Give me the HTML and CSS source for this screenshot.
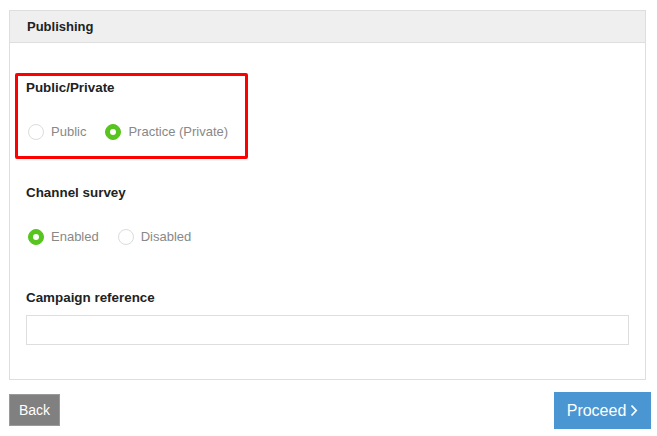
FILE: index.html
```html
<!DOCTYPE html>
<html>
<head>
<meta charset="utf-8">
<link rel="stylesheet" href="styles.css">
</head>
<body>
<div class="page">
  <div class="panel">
    <div class="panel-head">Publishing</div>
    <div class="panel-body">
      <div class="group highlight">
        <div class="label">Public/Private</div>
        <div class="radios">
          <span class="radio"><span class="dot"></span><span class="rtext">Public</span></span>
          <span class="radio on"><span class="dot"></span><span class="rtext">Practice (Private)</span></span>
        </div>
      </div>
      <div class="group second">
        <div class="label">Channel survey</div>
        <div class="radios">
          <span class="radio on"><span class="dot"></span><span class="rtext">Enabled</span></span>
          <span class="radio"><span class="dot"></span><span class="rtext">Disabled</span></span>
        </div>
      </div>
      <div class="group third">
        <div class="label">Campaign reference</div>
        <input class="field" type="text">
      </div>
    </div>
  </div>
  <div class="footer">
    <button class="btn back">Back</button>
    <button class="btn proceed">Proceed <svg class="chev" width="8" height="13" viewBox="0 0 8 13"><path d="M1.5 1.5 L6.2 6.5 L1.5 11.5" fill="none" stroke="#fff" stroke-width="1.8"/></svg></button>
  </div>
</div>
</body>
</html>
```

FILE: styles.css
```css
html, body { margin: 0; padding: 0; background: #fff; }
body { font-family: "Liberation Sans", Arial, Helvetica, sans-serif; color: #222; }
.page { padding: 10px 6px 0 9px; width: 642px; }
.panel { width: 635px; border: 1px solid #dedede; }
.panel-head { height: 31px; line-height: 31px; background: #efefef; border-bottom: 1px solid #dedede; padding-left: 17px; font-size: 13px; font-weight: bold; color: #222; }
.panel-body { padding: 30px 16px 34px 16px; }
.label { font-size: 13.4px; font-weight: bold; line-height: 16px; color: #222; white-space: nowrap; }
.highlight { width: 219px; margin-left: -11px; border: 3px solid #ff0000; border-radius: 2px; padding: 4px 0 16px 8px; }
.radios { display: flex; align-items: center; margin-top: 28px; height: 16px; white-space: nowrap; }
.radio { display: flex; align-items: center; margin-right: 17px; margin-left: 2px; flex: none; }
.dot { width: 14px; height: 14px; border-radius: 50%; border: 1px solid #dcdcdc; background: #fff; box-sizing: content-box; flex: none; }
.radio.on .dot { background: #57c41f; border-color: #57c41f; position: relative; }
.radio.on .dot::after { content: ""; position: absolute; left: 4px; top: 4px; width: 6px; height: 6px; border-radius: 50%; background: #fff; }
.rtext { margin-left: 7px; font-size: 13px; color: #888; line-height: 16px; }
.second { margin-top: 26px; }
.third { margin-top: 45px; }
.field { display: block; margin-top: 9px; width: 603px; height: 30px; box-sizing: border-box; border: 1px solid #dedede; background: #fff; outline: none; padding: 0 8px; }
.footer { display: flex; justify-content: space-between; align-items: flex-start; margin-top: 12px; }
.btn { border: none; color: #fff; font-family: "Liberation Sans", Arial, sans-serif; cursor: pointer; padding: 0; }
.back { margin-top: 2px; width: 51px; height: 32px; background: #808080; border: 1px solid #9a9a9a; font-size: 14px; }
.proceed { width: 97px; height: 37px; background: #4a96d2; font-size: 16px; display: flex; align-items: center; justify-content: center; gap: 4px; }
.chev { display: block; }
```
